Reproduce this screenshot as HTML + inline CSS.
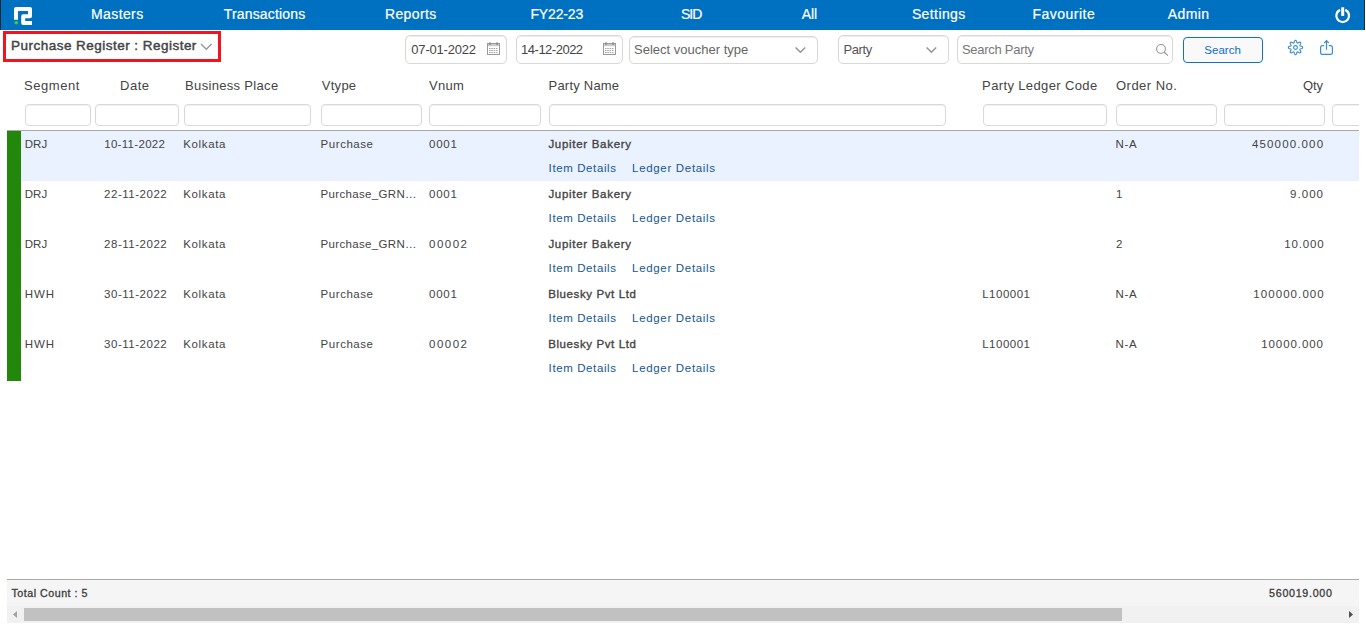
<!DOCTYPE html>
<html lang="en"><head><meta charset="utf-8"><title>Purchase Register</title><style>
*{box-sizing:border-box;margin:0;padding:0}
html,body{width:1366px;height:625px;overflow:hidden;background:#fff}
body{position:relative;font-family:"Liberation Sans",sans-serif}
.t{position:absolute;white-space:pre;line-height:20px;display:block}
.abs{position:absolute}
.nav{left:0;top:0;width:1365px;height:30px;background:#0070c0;border-left:1px solid #22282e;border-right:1px solid #22282e}
.redbox{left:3px;top:31px;width:218px;height:31px;border:3px solid #ec1520}
.inp{border:1px solid #d8d8d8;border-radius:5px;background:#fff;box-shadow:inset 0 1px 1px rgba(0,0,0,.075)}
.flt{top:104px;height:22px;border:1px solid #d9d9d9;border-radius:4px;background:#fff;box-shadow:inset 0 1px 1px rgba(0,0,0,.06)}
.btn{left:1183px;top:37px;width:80px;height:26px;border:1px solid #1272c4;border-radius:4px;background:#f9f9f9}
.hline{left:7px;top:130px;width:1352px;height:1px;background:#a9a9a9}
.green{left:7px;top:131px;width:14px;height:250px;background:#22870b}
.hl{left:21px;top:131px;width:1338px;height:50px;background:#eaf2ff}
.foot{left:7px;top:579px;width:1352px;height:27px;background:#f5f5f5;border-top:1px solid #a9a9a9}
.sb{left:7px;top:606px;width:1352px;height:17px;background:#f1f1f1}
.thumb{left:24px;top:608px;width:1098px;height:13px;background:#c1c1c1}
svg{position:absolute;overflow:visible}
</style></head>
<body>
<div class="abs nav"></div>
<div class="abs redbox"></div>
<div class="abs inp" style="left:405px;top:35px;width:102px;height:29px"></div>
<div class="abs inp" style="left:516px;top:35px;width:107px;height:29px"></div>
<div class="abs inp" style="left:629px;top:36px;width:189px;height:28px"></div>
<div class="abs inp" style="left:838px;top:35px;width:111px;height:29px"></div>
<div class="abs inp" style="left:957px;top:35px;width:216px;height:29px"></div>
<div class="abs btn"></div>
<div class="abs" style="left:7px;top:70px;width:1352px;height:60px;overflow:hidden"><div class="abs" style="left:-7px;top:-70px"><div class="abs flt" style="left:25px;width:66px"></div><div class="abs flt" style="left:95px;width:84px"></div><div class="abs flt" style="left:184px;width:127px"></div><div class="abs flt" style="left:321px;width:101px"></div><div class="abs flt" style="left:429px;width:112px"></div><div class="abs flt" style="left:549px;width:397px"></div><div class="abs flt" style="left:983px;width:124px"></div><div class="abs flt" style="left:1116px;width:101px"></div><div class="abs flt" style="left:1224px;width:101px"></div><div class="abs flt" style="left:1332px;width:40px"></div></div></div>
<div class="abs hline"></div>
<div class="abs hl"></div>
<div class="abs green"></div>
<div class="abs foot"></div>
<div class="abs sb"></div>
<div class="abs thumb"></div>

<!-- logo -->
<svg style="left:14px;top:7px" width="18" height="18" viewBox="0 0 18 18"><path d="M2 12.7V2H16V9.300H9.200V16H18" fill="none" stroke="#fff" stroke-width="4" stroke-linejoin="round"/><circle cx="2.300" cy="15.700" r="1.800" fill="#3cd62c"/></svg>
<!-- power -->
<svg style="left:1335px;top:7px" width="16" height="17" viewBox="0 0 16 17"><path d="M5.100 2.900A6.350 6.350 0 1 0 10.300 2.900" fill="none" stroke="#fff" stroke-width="2.300"/><path d="M7.700 0.300V8.900" stroke="#fff" stroke-width="3"/></svg>
<!-- title chevron -->
<svg style="left:200px;top:43px" width="12" height="8" viewBox="0 0 12 8"><path d="M1 1L6.300 6.300L11.600 1" fill="none" stroke="#999" stroke-width="1.500"/></svg>
<!-- select chevrons -->
<svg style="left:795px;top:47px" width="11" height="7" viewBox="0 0 11 7"><path d="M0.600 0.500L5.400 5.300L10.200 0.500" fill="none" stroke="#959595" stroke-width="1.500"/></svg>
<svg style="left:926px;top:47px" width="11" height="7" viewBox="0 0 11 7"><path d="M0.600 0.500L5.400 5.300L10.200 0.500" fill="none" stroke="#959595" stroke-width="1.500"/></svg>
<!-- calendar icons -->
<svg class="cal" style="left:487px;top:42px" width="13" height="13" viewBox="0 0 13 13"><rect x="0.5" y="1.5" width="12" height="11" fill="#fff" stroke="#9a9a9a"/><rect x="1" y="2" width="11" height="2.2" fill="#c9c9c9"/><path d="M3 0.3V3M10 0.3V3" stroke="#8a8a8a" stroke-width="1.4"/><path d="M2 6.5H11M2 8.5H11M2 10.5H11" stroke="#a8a8a8" stroke-width="1" stroke-dasharray="1.6 0.7"/></svg>
<svg class="cal" style="left:603px;top:42px" width="13" height="13" viewBox="0 0 13 13"><rect x="0.5" y="1.5" width="12" height="11" fill="#fff" stroke="#9a9a9a"/><rect x="1" y="2" width="11" height="2.2" fill="#c9c9c9"/><path d="M3 0.3V3M10 0.3V3" stroke="#8a8a8a" stroke-width="1.4"/><path d="M2 6.5H11M2 8.5H11M2 10.5H11" stroke="#a8a8a8" stroke-width="1" stroke-dasharray="1.6 0.7"/></svg>
<!-- magnifier -->
<svg style="left:1156px;top:44px" width="13" height="13" viewBox="0 0 13 13"><circle cx="5" cy="4.900" r="4.400" fill="none" stroke="#979797" stroke-width="1.100"/><path d="M8.100 8L11.800 11.700" stroke="#979797" stroke-width="1.200"/></svg>
<!-- gear -->
<svg style="left:1288px;top:40px" width="15" height="15" viewBox="0 0 15 15"><path fill="none" stroke="#3a8dd2" stroke-width="1.100" stroke-linejoin="round" d="M14.60 7.50L14.59 7.85L14.39 8.18L13.91 8.45L13.34 8.66L12.76 8.82L12.26 8.94L12.02 9.12L11.93 9.34L11.84 9.55L11.89 9.84L12.15 10.29L12.45 10.81L12.70 11.36L12.85 11.89L12.76 12.27L12.52 12.52L12.27 12.76L11.89 12.85L11.36 12.70L10.81 12.45L10.29 12.15L9.84 11.89L9.55 11.84L9.34 11.93L9.12 12.02L8.94 12.26L8.82 12.76L8.66 13.34L8.45 13.91L8.18 14.39L7.85 14.59L7.50 14.60L7.15 14.59L6.82 14.39L6.55 13.91L6.34 13.34L6.18 12.76L6.06 12.26L5.88 12.02L5.66 11.93L5.45 11.84L5.16 11.89L4.71 12.15L4.19 12.45L3.64 12.70L3.11 12.85L2.73 12.76L2.48 12.52L2.24 12.27L2.15 11.89L2.30 11.36L2.55 10.81L2.85 10.29L3.11 9.84L3.16 9.55L3.07 9.34L2.98 9.12L2.74 8.94L2.24 8.82L1.66 8.66L1.09 8.45L0.61 8.18L0.41 7.85L0.40 7.50L0.41 7.15L0.61 6.82L1.09 6.55L1.66 6.34L2.24 6.18L2.74 6.06L2.98 5.88L3.07 5.66L3.16 5.45L3.11 5.16L2.85 4.71L2.55 4.19L2.30 3.64L2.15 3.11L2.24 2.73L2.48 2.48L2.73 2.24L3.11 2.15L3.64 2.30L4.19 2.55L4.71 2.85L5.16 3.11L5.45 3.16L5.66 3.07L5.88 2.98L6.06 2.74L6.18 2.24L6.34 1.66L6.55 1.09L6.82 0.61L7.15 0.41L7.50 0.40L7.85 0.41L8.18 0.61L8.45 1.09L8.66 1.66L8.82 2.24L8.94 2.74L9.12 2.98L9.34 3.07L9.55 3.16L9.84 3.11L10.29 2.85L10.81 2.55L11.36 2.30L11.89 2.15L12.27 2.24L12.52 2.48L12.76 2.73L12.85 3.11L12.70 3.64L12.45 4.19L12.15 4.71L11.89 5.16L11.84 5.45L11.93 5.66L12.02 5.88L12.26 6.06L12.76 6.18L13.34 6.34L13.91 6.55L14.39 6.82L14.59 7.15Z"/><circle cx="7.500" cy="7.500" r="1.900" fill="none" stroke="#3a8dd2" stroke-width="1.100"/></svg>
<!-- share -->
<svg style="left:1320px;top:40px" width="13" height="15" viewBox="0 0 13 15"><path d="M4.200 5.700H2.500Q0.600 5.700 0.600 7.600V12.500Q0.600 14.400 2.500 14.400H10.500Q12.400 14.400 12.400 12.500V7.600Q12.400 5.700 10.500 5.700H8.800" fill="none" stroke="#3a8dd2" stroke-width="1.200"/><path d="M6.500 9.800V0.900M4.200 3L6.500 0.700L8.800 3" fill="none" stroke="#3a8dd2" stroke-width="1.200"/></svg>
<!-- scroll arrows -->
<svg style="left:13px;top:611px" width="4" height="7" viewBox="0 0 4 7"><path d="M4 0V7L0 3.500Z" fill="#a3a3a3"/></svg>
<svg style="left:1349px;top:611px" width="4" height="7" viewBox="0 0 4 7"><path d="M0 0V7L4 3.500Z" fill="#505050"/></svg>

<span class="t" style="left:91.0px;top:4.1px;font-size:14px;color:#fff;letter-spacing:0.397px;-webkit-text-stroke:0.2px #fff;">Masters</span>
<span class="t" style="left:223.8px;top:4.1px;font-size:14px;color:#fff;letter-spacing:0.155px;-webkit-text-stroke:0.2px #fff;">Transactions</span>
<span class="t" style="left:385.0px;top:4.1px;font-size:14px;color:#fff;letter-spacing:0.357px;-webkit-text-stroke:0.2px #fff;">Reports</span>
<span class="t" style="left:530.42px;top:4.1px;font-size:14px;color:#fff;letter-spacing:-0.143px;-webkit-text-stroke:0.2px #fff;">FY22-23</span>
<span class="t" style="left:680.88px;top:4.1px;font-size:14px;color:#fff;letter-spacing:-0.97px;-webkit-text-stroke:0.2px #fff;">SID</span>
<span class="t" style="left:801.68px;top:4.1px;font-size:14px;color:#fff;letter-spacing:-0.04px;-webkit-text-stroke:0.2px #fff;">All</span>
<span class="t" style="left:911.88px;top:4.1px;font-size:14px;color:#fff;letter-spacing:0.405px;-webkit-text-stroke:0.2px #fff;">Settings</span>
<span class="t" style="left:1032.42px;top:4.1px;font-size:14px;color:#fff;letter-spacing:0.495px;-webkit-text-stroke:0.2px #fff;">Favourite</span>
<span class="t" style="left:1167.8px;top:4.1px;font-size:14px;color:#fff;letter-spacing:0.42px;-webkit-text-stroke:0.2px #fff;">Admin</span>
<span class="t" style="left:11.1px;top:36.3px;font-size:13.5px;color:#444;letter-spacing:0.47px;-webkit-text-stroke:0.45px #444;">Purchase Register : Register</span>
<span class="t" style="left:411.32px;top:39.5px;font-size:13px;color:#444;letter-spacing:-0.198px;">07-01-2022</span>
<span class="t" style="left:521.1px;top:39.5px;font-size:13px;color:#444;letter-spacing:-0.499px;">14-12-2022</span>
<span class="t" style="left:634.1px;top:39.5px;font-size:13px;color:#666;letter-spacing:-0.004px;">Select voucher type</span>
<span class="t" style="left:843.52px;top:39.5px;font-size:13px;color:#555;letter-spacing:-0.415px;">Party</span>
<span class="t" style="left:961.98px;top:39.5px;font-size:13px;color:#777;letter-spacing:-0.279px;">Search Party</span>
<span class="t" style="left:1204.2px;top:40.0px;font-size:11.5px;color:#106dc3;letter-spacing:0.07px;">Search</span>
<span class="t" style="left:24.1px;top:75.5px;font-size:13px;color:#444;letter-spacing:0.519px;">Segment</span>
<span class="t" style="left:120.1px;top:75.5px;font-size:13px;color:#444;letter-spacing:0.513px;">Date</span>
<span class="t" style="left:185.1px;top:75.5px;font-size:13px;color:#444;letter-spacing:0.318px;">Business Place</span>
<span class="t" style="left:321.82px;top:75.5px;font-size:13px;color:#444;letter-spacing:0.26px;">Vtype</span>
<span class="t" style="left:428.9px;top:75.5px;font-size:13px;color:#444;letter-spacing:0.353px;">Vnum</span>
<span class="t" style="left:548.52px;top:75.5px;font-size:13px;color:#444;letter-spacing:0.217px;">Party Name</span>
<span class="t" style="left:982.1px;top:75.5px;font-size:13px;color:#444;letter-spacing:0.37px;">Party Ledger Code</span>
<span class="t" style="left:1116.02px;top:75.5px;font-size:13px;color:#444;letter-spacing:0.475px;">Order No.</span>
<span class="t" style="left:1302.9px;top:75.5px;font-size:13px;color:#444;letter-spacing:-0.01px;">Qty</span>
<span class="t" style="left:24.86px;top:134.0px;font-size:11.5px;color:#444;letter-spacing:-0.04px;">DRJ</span>
<span class="t" style="left:104.2px;top:134.0px;font-size:11.5px;color:#444;letter-spacing:0.311px;">10-11-2022</span>
<span class="t" style="left:183.2px;top:134.0px;font-size:11.5px;color:#444;letter-spacing:0.649px;">Kolkata</span>
<span class="t" style="left:320.62px;top:134.0px;font-size:11.5px;color:#444;letter-spacing:0.543px;">Purchase</span>
<span class="t" style="left:429.0px;top:134.0px;font-size:11.5px;color:#444;letter-spacing:0.769px;">0001</span>
<span class="t" style="left:548.42px;top:134.0px;font-size:11.5px;color:#444;letter-spacing:0.703px;-webkit-text-stroke:0.35px #444;">Jupiter Bakery</span>
<span class="t" style="left:1115.62px;top:134.0px;font-size:11.5px;color:#444;letter-spacing:0.58px;">N-A</span>
<span class="t" style="left:1252.0px;top:134.0px;font-size:11.5px;color:#444;letter-spacing:1.142px;">450000.000</span>
<span class="t" style="left:548.62px;top:158.0px;font-size:11.5px;color:#17578f;letter-spacing:0.606px;">Item Details</span>
<span class="t" style="left:632.08px;top:158.0px;font-size:11.5px;color:#17578f;letter-spacing:0.678px;">Ledger Details</span>
<span class="t" style="left:24.86px;top:184.0px;font-size:11.5px;color:#444;letter-spacing:-0.04px;">DRJ</span>
<span class="t" style="left:104.12px;top:184.0px;font-size:11.5px;color:#444;letter-spacing:0.52px;">22-11-2022</span>
<span class="t" style="left:183.2px;top:184.0px;font-size:11.5px;color:#444;letter-spacing:0.649px;">Kolkata</span>
<span class="t" style="left:320.62px;top:184.0px;font-size:11.5px;color:#444;letter-spacing:0.324px;">Purchase_GRN…</span>
<span class="t" style="left:429.0px;top:184.0px;font-size:11.5px;color:#444;letter-spacing:0.769px;">0001</span>
<span class="t" style="left:548.42px;top:184.0px;font-size:11.5px;color:#444;letter-spacing:0.703px;-webkit-text-stroke:0.35px #444;">Jupiter Bakery</span>
<span class="t" style="left:1116.08px;top:184.0px;font-size:11.5px;color:#444;letter-spacing:0.0px;">1</span>
<span class="t" style="left:1290.12px;top:184.0px;font-size:11.5px;color:#444;letter-spacing:1.03px;">9.000</span>
<span class="t" style="left:548.62px;top:208.0px;font-size:11.5px;color:#17578f;letter-spacing:0.606px;">Item Details</span>
<span class="t" style="left:632.08px;top:208.0px;font-size:11.5px;color:#17578f;letter-spacing:0.678px;">Ledger Details</span>
<span class="t" style="left:24.86px;top:234.0px;font-size:11.5px;color:#444;letter-spacing:-0.04px;">DRJ</span>
<span class="t" style="left:104.12px;top:234.0px;font-size:11.5px;color:#444;letter-spacing:0.52px;">28-11-2022</span>
<span class="t" style="left:183.2px;top:234.0px;font-size:11.5px;color:#444;letter-spacing:0.649px;">Kolkata</span>
<span class="t" style="left:320.62px;top:234.0px;font-size:11.5px;color:#444;letter-spacing:0.324px;">Purchase_GRN…</span>
<span class="t" style="left:429.0px;top:234.0px;font-size:11.5px;color:#444;letter-spacing:1.51px;">00002</span>
<span class="t" style="left:548.42px;top:234.0px;font-size:11.5px;color:#444;letter-spacing:0.703px;-webkit-text-stroke:0.35px #444;">Jupiter Bakery</span>
<span class="t" style="left:1116.12px;top:234.0px;font-size:11.5px;color:#444;letter-spacing:0.0px;">2</span>
<span class="t" style="left:1284.2px;top:234.0px;font-size:11.5px;color:#444;letter-spacing:0.88px;">10.000</span>
<span class="t" style="left:548.62px;top:258.0px;font-size:11.5px;color:#17578f;letter-spacing:0.606px;">Item Details</span>
<span class="t" style="left:632.08px;top:258.0px;font-size:11.5px;color:#17578f;letter-spacing:0.678px;">Ledger Details</span>
<span class="t" style="left:24.86px;top:284.0px;font-size:11.5px;color:#444;letter-spacing:0.92px;">HWH</span>
<span class="t" style="left:104.12px;top:284.0px;font-size:11.5px;color:#444;letter-spacing:0.52px;">30-11-2022</span>
<span class="t" style="left:183.2px;top:284.0px;font-size:11.5px;color:#444;letter-spacing:0.649px;">Kolkata</span>
<span class="t" style="left:320.62px;top:284.0px;font-size:11.5px;color:#444;letter-spacing:0.543px;">Purchase</span>
<span class="t" style="left:429.0px;top:284.0px;font-size:11.5px;color:#444;letter-spacing:0.769px;">0001</span>
<span class="t" style="left:548.2px;top:284.0px;font-size:11.5px;color:#444;letter-spacing:0.601px;-webkit-text-stroke:0.35px #444;">Bluesky Pvt Ltd</span>
<span class="t" style="left:982.2px;top:284.0px;font-size:11.5px;color:#444;letter-spacing:0.507px;">L100001</span>
<span class="t" style="left:1115.62px;top:284.0px;font-size:11.5px;color:#444;letter-spacing:0.58px;">N-A</span>
<span class="t" style="left:1253.2px;top:284.0px;font-size:11.5px;color:#444;letter-spacing:1.09px;">100000.000</span>
<span class="t" style="left:548.62px;top:308.0px;font-size:11.5px;color:#17578f;letter-spacing:0.606px;">Item Details</span>
<span class="t" style="left:632.08px;top:308.0px;font-size:11.5px;color:#17578f;letter-spacing:0.678px;">Ledger Details</span>
<span class="t" style="left:24.86px;top:334.0px;font-size:11.5px;color:#444;letter-spacing:0.92px;">HWH</span>
<span class="t" style="left:104.12px;top:334.0px;font-size:11.5px;color:#444;letter-spacing:0.52px;">30-11-2022</span>
<span class="t" style="left:183.2px;top:334.0px;font-size:11.5px;color:#444;letter-spacing:0.649px;">Kolkata</span>
<span class="t" style="left:320.62px;top:334.0px;font-size:11.5px;color:#444;letter-spacing:0.543px;">Purchase</span>
<span class="t" style="left:429.0px;top:334.0px;font-size:11.5px;color:#444;letter-spacing:1.51px;">00002</span>
<span class="t" style="left:548.2px;top:334.0px;font-size:11.5px;color:#444;letter-spacing:0.601px;-webkit-text-stroke:0.35px #444;">Bluesky Pvt Ltd</span>
<span class="t" style="left:982.2px;top:334.0px;font-size:11.5px;color:#444;letter-spacing:0.507px;">L100001</span>
<span class="t" style="left:1115.62px;top:334.0px;font-size:11.5px;color:#444;letter-spacing:0.58px;">N-A</span>
<span class="t" style="left:1261.2px;top:334.0px;font-size:11.5px;color:#444;letter-spacing:0.93px;">10000.000</span>
<span class="t" style="left:548.62px;top:358.0px;font-size:11.5px;color:#17578f;letter-spacing:0.606px;">Item Details</span>
<span class="t" style="left:632.08px;top:358.0px;font-size:11.5px;color:#17578f;letter-spacing:0.678px;">Ledger Details</span>
<span class="t" style="left:11.52px;top:583.3px;font-size:10.7px;color:#3c3c3c;letter-spacing:0.496px;-webkit-text-stroke:0.3px #3c3c3c;">Total Count : 5</span>
<span class="t" style="left:1269.1px;top:583.3px;font-size:10.7px;color:#3c3c3c;letter-spacing:0.712px;-webkit-text-stroke:0.3px #3c3c3c;">560019.000</span>
</body></html>
